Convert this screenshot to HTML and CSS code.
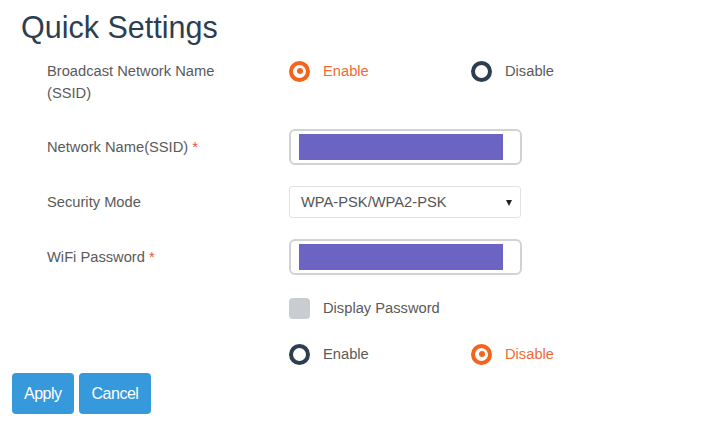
FILE: index.html
```html
<!DOCTYPE html>
<html lang="en">
<head>
<meta charset="utf-8">
<title>Quick Settings</title>
<link rel="stylesheet" href="styles.css">
</head>
<body>
<div class="page">
  <h1 class="title">Quick Settings</h1>
  <div class="form">
    <div class="row row-top">
      <div class="label">Broadcast Network Name<br>(SSID)</div>
      <div class="control radios">
        <label class="radio-opt on"><span class="radio checked"></span>Enable</label>
        <label class="radio-opt"><span class="radio"></span>Disable</label>
      </div>
    </div>
    <div class="row row-ssid">
      <div class="label">Network Name(SSID) <span class="req">*</span></div>
      <div class="control"><div class="field"><span class="mask"></span></div></div>
    </div>
    <div class="row row-sec">
      <div class="label">Security Mode</div>
      <div class="control"><div class="select">WPA-PSK/WPA2-PSK<span class="caret"></span></div></div>
    </div>
    <div class="row row-pass">
      <div class="label">WiFi Password <span class="req">*</span></div>
      <div class="control"><div class="field"><span class="mask"></span></div></div>
    </div>
    <div class="row row-check">
      <div class="label"></div>
      <div class="control"><label class="check-opt"><span class="checkbox"></span>Display Password</label></div>
    </div>
    <div class="row row-radio2">
      <div class="label"></div>
      <div class="control radios">
        <label class="radio-opt"><span class="radio"></span>Enable</label>
        <label class="radio-opt on"><span class="radio checked"></span>Disable</label>
      </div>
    </div>
  </div>
  <div class="actions">
    <button class="btn">Apply</button>
    <button class="btn">Cancel</button>
  </div>
</div>
</body>
</html>
```
FILE: styles.css
```css
* { box-sizing: border-box; }
html, body { margin: 0; padding: 0; background: #fff; }
body {
  font-family: "Liberation Sans", Arial, sans-serif;
  font-size: 14.7px;
  color: #555;
}
.page { width: 727px; height: 423px; }
.title {
  margin: 0;
  padding: 9px 0 0 21px;
  font-size: 30.5px;
  line-height: 36px;
  font-weight: normal;
  color: #2d3e50;
}
.form { padding-left: 47px; margin-top: 15px; }
.row { display: flex; align-items: center; }
.label { width: 242px; flex: none; line-height: 22px; color: #5a5a5a; }
.req { color: #e8543a; }
.control { flex: none; width: 233px; }
.row-top { align-items: flex-start; height: 44px; }
.row-ssid { margin-top: 25px; }
.row-sec { margin-top: 21px; }
.row-pass { margin-top: 21px; }
.row-check { margin-top: 22px; }
.row-radio2 { margin-top: 24px; }

.radios { display: flex; width: 400px; }
.radio-opt { display: flex; flex: none; align-items: center; width: 182px; line-height: 22px; color: #5a5a5a; }
.radio-opt.on { color: #f26b35; }
.radio {
  width: 21px; height: 21px; border-radius: 50%;
  border: 4px solid #2c3e50; background: #fff;
  margin-right: 13px; flex: none;
  display: flex; align-items: center; justify-content: center;
}
.radio.checked { border-color: #f5641e; }
.radio.checked::after {
  content: ""; width: 6px; height: 6px; border-radius: 50%; background: #f5641e;
}

.field {
  width: 233px; height: 36px;
  border: 2px solid #d2d2d2; border-radius: 6px;
  padding: 3px 0 0 8px; background: #fff;
}
.mask { display: block; width: 204px; height: 26px; background: #6b64c2; }

.select {
  position: relative;
  width: 232px; height: 32px;
  border: 1px solid #e2e2e2; border-radius: 3px;
  padding-left: 11px; line-height: 30px; color: #555;
}
.caret {
  position: absolute; right: 8px; top: 13px;
  width: 0; height: 0;
  border-left: 3.5px solid transparent; border-right: 3.5px solid transparent;
  border-top: 6px solid #222;
}

.check-opt { display: flex; align-items: center; line-height: 22px; color: #5a5a5a; }
.checkbox {
  width: 21px; height: 21px; border-radius: 4px; background: #c9ccd0;
  margin-right: 13px; flex: none;
}

.actions { display: flex; gap: 5px; padding-left: 12px; margin-top: 8px; }
.btn {
  height: 41px; padding: 0 12px;
  background: #3699dc; color: #fff;
  border: none; border-radius: 4px;
  font-family: "Liberation Sans", Arial, sans-serif;
  font-size: 16px; letter-spacing: -0.5px;
}
.btn + .btn { padding: 0 13px; }
```
